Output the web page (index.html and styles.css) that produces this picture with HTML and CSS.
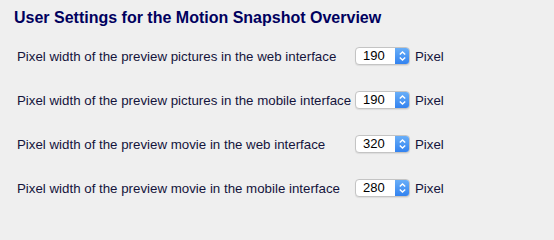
FILE: index.html
```html
<!DOCTYPE html>
<html>
<head>
<meta charset="utf-8">
<link rel="stylesheet" href="styles.css">
</head>
<body>
<div class="page">
  <h1 class="title">User Settings for the Motion Snapshot Overview</h1>
  <div class="settings">
    <div class="row">
      <span class="label">Pixel width of the preview pictures in the web interface</span>
      <span class="select"><span class="value">190</span><span class="stepper"><svg width="15" height="18" viewBox="0 0 15 18"><path d="M4.8 7.6 L7.5 4.9 L10.2 7.6 M4.8 10.4 L7.5 13.1 L10.2 10.4" fill="none" stroke="#fff" stroke-width="1.4"/></svg></span></span>
      <span class="unit">Pixel</span>
    </div>
    <div class="row">
      <span class="label">Pixel width of the preview pictures in the mobile interface</span>
      <span class="select"><span class="value">190</span><span class="stepper"><svg width="15" height="18" viewBox="0 0 15 18"><path d="M4.8 7.6 L7.5 4.9 L10.2 7.6 M4.8 10.4 L7.5 13.1 L10.2 10.4" fill="none" stroke="#fff" stroke-width="1.4"/></svg></span></span>
      <span class="unit">Pixel</span>
    </div>
    <div class="row">
      <span class="label">Pixel width of the preview movie in the web interface</span>
      <span class="select"><span class="value">320</span><span class="stepper"><svg width="15" height="18" viewBox="0 0 15 18"><path d="M4.8 7.6 L7.5 4.9 L10.2 7.6 M4.8 10.4 L7.5 13.1 L10.2 10.4" fill="none" stroke="#fff" stroke-width="1.4"/></svg></span></span>
      <span class="unit">Pixel</span>
    </div>
    <div class="row">
      <span class="label">Pixel width of the preview movie in the mobile interface</span>
      <span class="select"><span class="value">280</span><span class="stepper"><svg width="15" height="18" viewBox="0 0 15 18"><path d="M4.8 7.6 L7.5 4.9 L10.2 7.6 M4.8 10.4 L7.5 13.1 L10.2 10.4" fill="none" stroke="#fff" stroke-width="1.4"/></svg></span></span>
      <span class="unit">Pixel</span>
    </div>
  </div>
</div>
</body>
</html>
```

FILE: styles.css
```css
html, body {
  margin: 0;
  padding: 0;
  background: #efefef;
}
body {
  font-family: "Liberation Sans", Arial, sans-serif;
  width: 554px;
  height: 221px;
  overflow: hidden;
}
.page {
  padding: 8px 0 0 14px;
}
.title {
  margin: 0;
  font-size: 16px;
  line-height: 20px;
  font-weight: bold;
  color: #00005e;
}
.settings {
  display: flex;
  flex-direction: column;
  margin-top: 6px;
  padding-left: 3px;
}
.row {
  display: flex;
  align-items: center;
  height: 44px;
}
.label {
  width: 338px;
  font-size: 13.3px;
  color: #14143c;
  white-space: nowrap;
}
.select {
  display: flex;
  width: 55px;
  height: 18px;
  box-sizing: border-box;
  border: 1px solid #c4c4c4;
  border-radius: 4px;
  background: #fff;
  overflow: hidden;
  box-shadow: 0 1px 1px rgba(0,0,0,0.08);
}
.value {
  flex: 1;
  font-size: 13px;
  line-height: 16px;
  color: #000;
  padding-left: 7px;
}
.stepper {
  width: 15px;
  display: flex;
  align-items: center;
  justify-content: center;
  margin: -1px -1px -1px 0;
  background: linear-gradient(#6cb1f8, #2f80ef);
}
.stepper svg {
  display: block;
}
.unit {
  margin-left: 5px;
  font-size: 13.3px;
  color: #14143c;
}
```
